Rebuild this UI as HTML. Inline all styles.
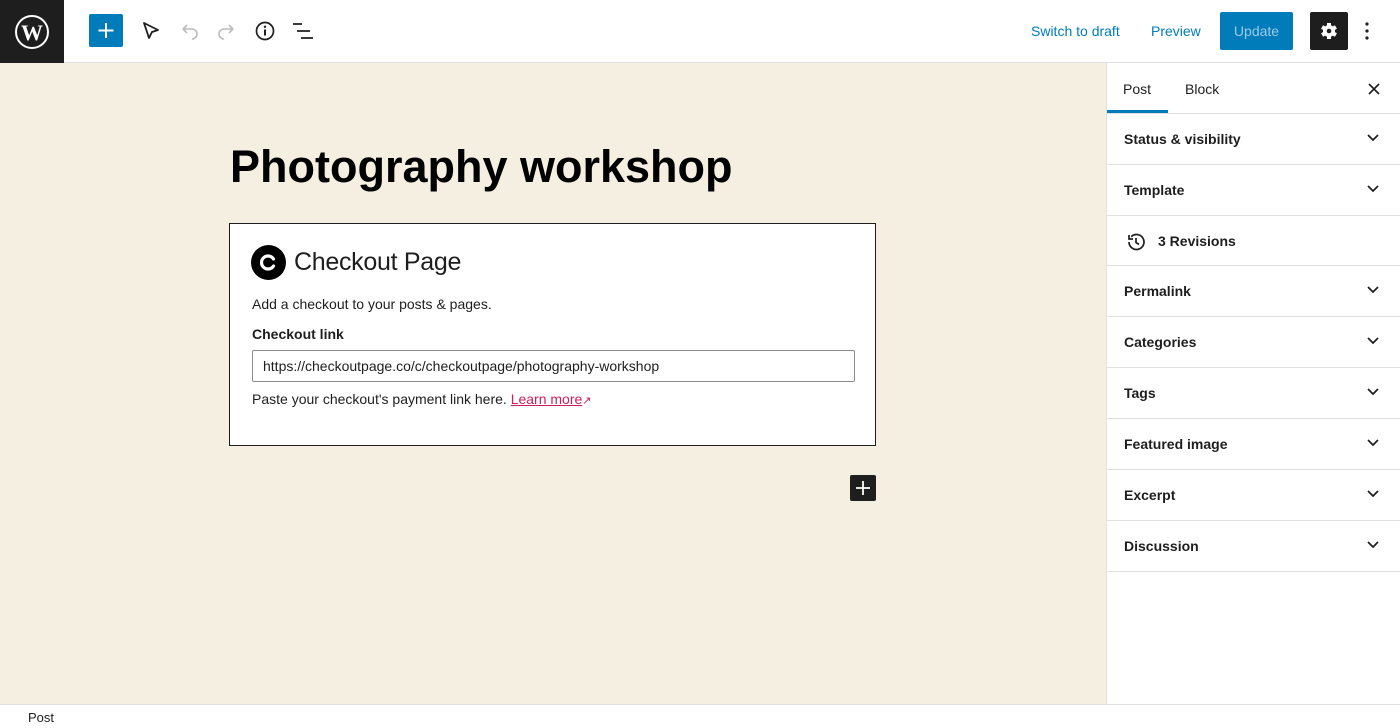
<!DOCTYPE html>
<html><head><meta charset="utf-8"><style>
*{box-sizing:border-box;margin:0;padding:0}
body{width:1400px;height:728px;overflow:hidden;font-family:"Liberation Sans",sans-serif;background:#fff;position:relative;color:#1e1e1e}
.top{position:absolute;left:0;top:0;width:1400px;height:63px;background:#fff;border-bottom:1px solid #e0e0e0}
.wp{position:absolute;left:0;top:0;width:64px;height:63px;background:#1e1e1e}
.ic{position:absolute}
.canvas{position:absolute;left:0;top:63px;width:1106px;height:641px;background:#f4efe1}
.side{position:absolute;left:1106px;top:63px;width:294px;height:641px;background:#fff;border-left:1px solid #e0e0e0}
.row{height:51px;border-bottom:1px solid #e0e0e0;position:relative;font-size:14px;font-weight:bold;padding:17px 0 0 17px;color:#1e1e1e}
.row svg{position:absolute;right:20px;top:19px}
.foot{position:absolute;left:0;top:704px;width:1400px;height:24px;background:#fff;border-top:1px solid #e0e0e0;font-size:13px;padding:5px 0 0 28px}
</style></head><body>
<div class="top">
 <div class="wp"><svg class="ic" style="left:14px;top:14px" width="36" height="36" viewBox="0 0 36 36"><circle cx="18" cy="18" r="16" fill="none" stroke="#fff" stroke-width="2"/><text x="18" y="26" text-anchor="middle" font-family="Liberation Serif" font-weight="bold" font-size="22" fill="#fff">W</text></svg></div>
 <div style="position:absolute;left:89px;top:14px;width:34px;height:33px;background:#007cba;border-radius:2px"><svg width="34" height="33"><path d="M17 9v15M9.5 16.5h15" stroke="#fff" stroke-width="2"/></svg></div>
 <svg class="ic" style="left:140px;top:20px" width="22" height="22"><path d="M4 3l14 7-6 2-3 6z" fill="none" stroke="#1e1e1e" stroke-width="1.8" stroke-linejoin="round"/></svg>
 <svg class="ic" style="left:178px;top:21px" width="22" height="20"><path d="M5 8h9a5 5 0 0 1 0 10M5 8l4-4M5 8l4 4" fill="none" stroke="#bbb" stroke-width="1.6"/></svg>
 <svg class="ic" style="left:216px;top:21px" width="22" height="20"><path d="M17 8H8a5 5 0 0 0 0 10M17 8l-4-4M17 8l-4 4" fill="none" stroke="#bbb" stroke-width="1.6"/></svg>
 <svg class="ic" style="left:254px;top:20px" width="22" height="22"><circle cx="11" cy="11" r="8.5" fill="none" stroke="#1e1e1e" stroke-width="1.7"/><path d="M11 9.5v6" stroke="#1e1e1e" stroke-width="2"/><circle cx="11" cy="6.8" r="1.2" fill="#1e1e1e"/></svg>
 <svg class="ic" style="left:292px;top:21px" width="24" height="20"><path d="M1 3h9M5 10h13M9 17h12" stroke="#1e1e1e" stroke-width="1.8"/></svg>
 <div style="position:absolute;left:1031px;top:23px;font-size:14px;color:#007cba">Switch to draft</div>
 <div style="position:absolute;left:1151px;top:23px;font-size:14px;color:#007cba">Preview</div>
 <div style="position:absolute;left:1220px;top:12px;width:73px;height:38px;background:#007cba;border-radius:2px;color:#9ccbe6;font-size:14px;text-align:center;line-height:38px">Update</div>
 <div style="position:absolute;left:1310px;top:12px;width:38px;height:38px;background:#1e1e1e;border-radius:2px"><svg width="38" height="38"><g fill="#fff" transform="translate(19 19)"><rect x="-2" y="-8" width="4" height="16"/><rect x="-2" y="-8" width="4" height="16" transform="rotate(60)"/><rect x="-2" y="-8" width="4" height="16" transform="rotate(120)"/><circle r="6"/></g><circle cx="19" cy="19" r="2.3" fill="#1e1e1e"/></svg></div>
 <svg class="ic" style="left:1362px;top:20px" width="10" height="22"><circle cx="5" cy="4" r="1.6" fill="#1e1e1e"/><circle cx="5" cy="11" r="1.6" fill="#1e1e1e"/><circle cx="5" cy="18" r="1.6" fill="#1e1e1e"/></svg>
</div>
<div class="canvas">
 <div style="position:absolute;left:230px;top:78px;font-size:45px;font-weight:bold;color:#000">Photography workshop</div>
 <div style="position:absolute;left:229px;top:160px;width:647px;height:223px;border:1px solid #1e1e1e;background:#fff">
  <svg style="position:absolute;left:21px;top:21px" width="35" height="35"><circle cx="17.5" cy="17.5" r="17.5" fill="#000"/><path d="M22.5 21a6.5 6.5 0 1 1 0-7" fill="none" stroke="#fff" stroke-width="3.2" stroke-linecap="round"/></svg>
  <div style="position:absolute;left:64px;top:24px;font-size:25px;color:#1e1e1e;letter-spacing:-0.3px">Checkout Page</div>
  <div style="position:absolute;left:22px;top:72px;font-size:14px">Add a checkout to your posts &amp; pages.</div>
  <div style="position:absolute;left:22px;top:102px;font-size:14px;font-weight:bold">Checkout link</div>
  <div style="position:absolute;left:22px;top:126px;width:603px;height:32px;border:1px solid #8c8c8c;border-radius:2px;font-size:14px;padding:7px 0 0 10px">https://checkoutpage.co/c/checkoutpage/photography-workshop</div>
  <div style="position:absolute;left:22px;top:167px;font-size:14px">Paste your checkout's payment link here. <span style="color:#cc1f5a;text-decoration:underline">Learn more</span><span style="color:#cc1f5a;font-size:11px">↗</span></div>
 </div>
 <div style="position:absolute;left:850px;top:412px;width:26px;height:26px;background:#1e1e1e;border-radius:2px"><svg width="26" height="26"><path d="M13 6v14M6 13h14" stroke="#fff" stroke-width="1.8"/></svg></div>
</div>
<div class="side">
 <div style="height:51px;border-bottom:1px solid #e0e0e0;position:relative;font-size:14px">
  <div style="position:absolute;left:0;top:0;width:61px;height:50px;border-bottom:3px solid #007cba;padding:18px 0 0 16px;font-weight:normal">Post</div>
  <div style="position:absolute;left:78px;top:18px">Block</div>
  <svg style="position:absolute;left:260px;top:19px" width="14" height="14"><path d="M2 2l10 10M12 2L2 12" stroke="#1e1e1e" stroke-width="1.6"/></svg>
 </div>
 <div class="row">Status &amp; visibility<svg width="14" height="10"><path d="M2 2l5 5 5-5" fill="none" stroke="#1e1e1e" stroke-width="1.7"/></svg></div>
 <div class="row">Template<svg width="14" height="10"><path d="M2 2l5 5 5-5" fill="none" stroke="#1e1e1e" stroke-width="1.7"/></svg></div>
 <div class="row" style="height:50px;padding-left:51px"><svg style="left:18px;right:auto;top:15px" width="22" height="22"><path d="M4 11a7.5 7.5 0 1 0 2.2-5.3M4 4v4h4M11 7v4.5l3 2" fill="none" stroke="#1e1e1e" stroke-width="1.7"/></svg>3 Revisions</div>
 <div class="row">Permalink<svg width="14" height="10"><path d="M2 2l5 5 5-5" fill="none" stroke="#1e1e1e" stroke-width="1.7"/></svg></div>
 <div class="row">Categories<svg width="14" height="10"><path d="M2 2l5 5 5-5" fill="none" stroke="#1e1e1e" stroke-width="1.7"/></svg></div>
 <div class="row">Tags<svg width="14" height="10"><path d="M2 2l5 5 5-5" fill="none" stroke="#1e1e1e" stroke-width="1.7"/></svg></div>
 <div class="row">Featured image<svg width="14" height="10"><path d="M2 2l5 5 5-5" fill="none" stroke="#1e1e1e" stroke-width="1.7"/></svg></div>
 <div class="row">Excerpt<svg width="14" height="10"><path d="M2 2l5 5 5-5" fill="none" stroke="#1e1e1e" stroke-width="1.7"/></svg></div>
 <div class="row">Discussion<svg width="14" height="10"><path d="M2 2l5 5 5-5" fill="none" stroke="#1e1e1e" stroke-width="1.7"/></svg></div>
</div>
<div class="foot">Post</div>
</body></html>
